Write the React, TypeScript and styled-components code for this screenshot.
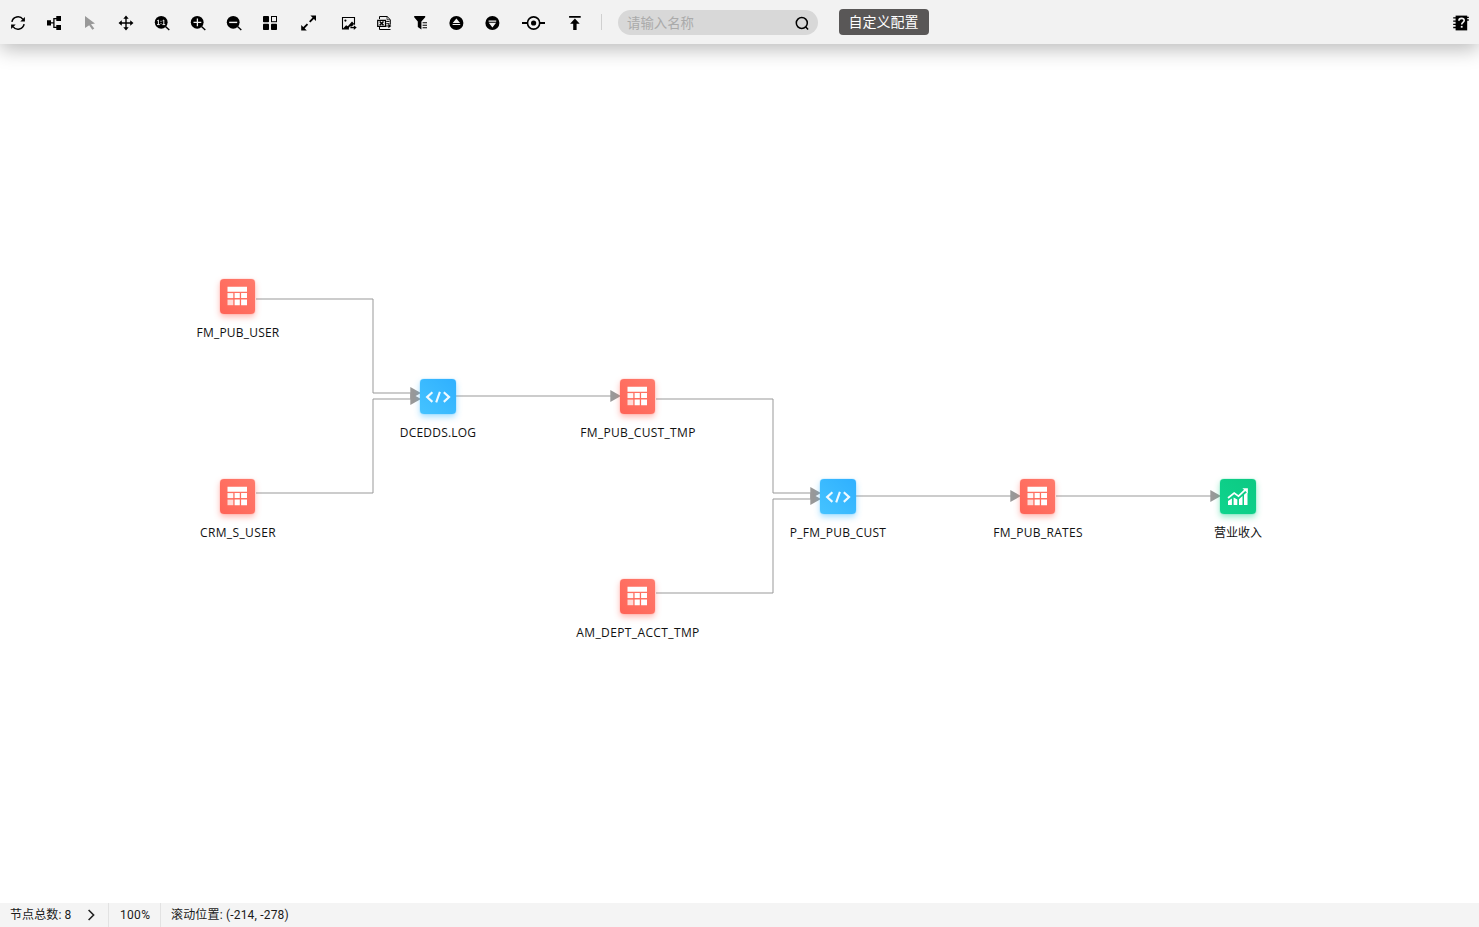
import React from 'react';
import styled, { createGlobalStyle } from 'styled-components';

const GlobalStyle = createGlobalStyle`
  * { box-sizing: border-box; }
  html, body { margin: 0; background: #fff; overflow: hidden; }
`;

const Page = styled.div`
  display: flex;
  flex-direction: column;
  height: 100vh;
  font-family: Roboto, 'Noto Sans CJK SC', sans-serif;
  font-size: 12px;
  color: #1a1a1a;
`;

const Toolbar = styled.header`
  display: flex;
  align-items: center;
  flex: none;
  height: 44px;
  background: #f2f2f2;
  box-shadow: 0 5px 20px rgba(0, 0, 0, 0.28);
  z-index: 1;
`;

const ToolButton = styled.button<{ $width?: number; $muted?: boolean }>`
  display: flex;
  align-items: center;
  justify-content: center;
  width: ${(p) => p.$width ?? 36}px;
  height: 44px;
  padding: 2px 0 0;
  border: 0;
  background: none;
  color: ${(p) => (p.$muted ? '#999' : '#000')};
`;

const Divider = styled.div`
  width: 1px;
  height: 16px;
  margin: 0 16px 0 7px;
  background: #d0d0d0;
`;

const SearchBox = styled.label`
  display: flex;
  align-items: center;
  width: 200px;
  height: 25px;
  margin-top: 1px;
  padding: 0 8px 0 9px;
  border-radius: 13px;
  background: #d8d8d8;
`;

const SearchInput = styled.input`
  flex: 1;
  min-width: 0;
  height: 20px;
  padding: 0 0 2px;
  border: 0;
  outline: 0;
  background: none;
  font: 13.4px 'Noto Sans CJK SC', sans-serif;
  &::placeholder { color: #aaa; }
`;

const ConfigButton = styled.button`
  width: 90px;
  height: 26px;
  margin-left: 21px;
  padding: 0 1px 2px 0;
  border: 0;
  border-radius: 4px;
  background: #595757;
  color: #fff;
  font: 14px/24px 'Noto Sans CJK SC', sans-serif;
`;

const Spacer = styled.div`
  flex: 1;
`;

const Canvas = styled.main`
  position: relative;
  flex: 1;
`;

const EdgeLayer = styled.svg`
  position: absolute;
  inset: 0;
  width: 100%;
  height: 100%;
`;

const palette = {
  table: { from: '#ff7a6c', to: '#ff6457', glow: 'rgba(255, 100, 87, 0.45)' },
  script: { from: '#2fb0ff', to: '#45c3ff', glow: 'rgba(56, 184, 255, 0.45)' },
  metric: { from: '#0cc983', to: '#0fd48d', glow: 'rgba(14, 206, 136, 0.45)' },
};
type Kind = keyof typeof palette;

const NodeBox = styled.div<{ $x: number; $y: number }>`
  position: absolute;
  left: ${(p) => p.$x}px;
  top: ${(p) => p.$y}px;
  display: flex;
  flex-direction: column;
  align-items: center;
  width: 160px;
  margin-left: -80px;
`;

const NodeTile = styled.div<{ $kind: Kind }>`
  width: ${(p) => (p.$kind === 'table' ? 35 : 36)}px;
  height: 35px;
  margin-right: ${(p) => (p.$kind === 'table' ? 1 : 0)}px;
  border-radius: 4px;
  background: linear-gradient(to top right, ${(p) => palette[p.$kind].to}, ${(p) => palette[p.$kind].from});
  box-shadow: 0 3px 6px ${(p) => palette[p.$kind].glow}, 0 0 1px ${(p) => palette[p.$kind].from};
  svg { display: block; }
`;

const NodeLabel = styled.div<{ $spacing: number }>`
  margin-top: 10px;
  font: 12px/18px 'Open Sans', 'Noto Sans CJK SC', sans-serif;
  letter-spacing: ${(p) => p.$spacing}px;
  color: #111;
  white-space: nowrap;
`;

const StatusBar = styled.footer`
  display: flex;
  flex: none;
  height: 24px;
  background: #f4f4f4;
`;

const StatusItem = styled.div<{ $width?: number; $spacing: number; $indent?: number }>`
  display: flex;
  align-items: center;
  width: ${(p) => (p.$width ? `${p.$width}px` : 'auto')};
  padding: 0 0 1px ${(p) => p.$indent ?? 10}px;
  border-right: ${(p) => (p.$width ? '1px solid #e2e2e2' : '0')};
  letter-spacing: ${(p) => p.$spacing}px;
  line-height: 16px;
  white-space: nowrap;
  svg { margin-left: 16px; }
`;

const Icon = ({ children, width = 18 }: { children: React.ReactNode; width?: number }) => (
  <svg width={width} height="18" viewBox={`0 0 ${width} 18`} fill="currentColor">
    {children}
  </svg>
);

const Lens = ({ children }: { children: React.ReactNode }) => (
  <Icon>
    <circle cx="8.2" cy="8.3" r="6.4" />
    <path d="M12.5 12.6l3.8 3.5" stroke="currentColor" strokeWidth="1.4" />
    {children}
  </Icon>
);

const tools: { name: string; width?: number; muted?: boolean; icon: React.ReactNode }[] = [
  {
    name: '刷新',
    icon: (
      <Icon>
        <path d="M2.9 7.9A6.2 6.2 0 0 1 14 5.4M15.1 10.1A6.2 6.2 0 0 1 4 12.6" fill="none" stroke="currentColor" strokeWidth="1.5" />
        <path d="M15.9 3v4.4h-4.6zM2.1 15v-4.4h4.6z" />
      </Icon>
    ),
  },
  {
    name: '布局',
    icon: (
      <Icon>
        <path d="M2 6.3h4v5.2H2zM11.3 2h4.7v5h-4.7zM11.3 11h4.7v5h-4.7z" />
        <path d="M6 8.9h3M12 4.6H8.9v8.8H12" fill="none" stroke="currentColor" strokeWidth="1.3" />
      </Icon>
    ),
  },
  { name: '选择', muted: true, icon: <Icon><path d="M4 2l10 7.6-4 .6 3.3 4.2-2 1.3-3.1-4.4L4 14z" /></Icon> },
  {
    name: '移动',
    icon: (
      <Icon>
        <path d="M9 4v10M4 9h10" stroke="currentColor" strokeWidth="1.4" />
        <path d="M9 1.5l2.7 3.3H6.3zM9 16.5l2.7-3.3H6.3zM1.5 9l3.3-2.7v5.4zM16.5 9l-3.3-2.7v5.4z" />
      </Icon>
    ),
  },
  {
    name: '原始大小',
    icon: (
      <Lens>
        <path d="M4.2 6.8l1.2-.8v4.6M4 10.6h2.8M9.6 6.8l1.2-.8v4.6M9.4 10.6h2.8M8 6.8v1M8 9.2v1" fill="none" stroke="#f2f2f2" strokeWidth="1" />
      </Lens>
    ),
  },
  { name: '放大', icon: <Lens><path d="M8.4 4.5v7.8M4.5 8.4h7.8" stroke="#f2f2f2" strokeWidth="1.3" /></Lens> },
  { name: '缩小', icon: <Lens><path d="M4.2 8.4h8" stroke="#f2f2f2" strokeWidth="1.4" /></Lens> },
  {
    name: '缩略图',
    icon: (
      <Icon>
        <rect x="2" y="2" width="6" height="6.2" rx=".8" />
        <rect x="2" y="9.8" width="6" height="6.2" rx=".8" />
        <rect x="10" y="9.8" width="6" height="6.2" rx=".8" />
        <rect x="10.5" y="2.5" width="5" height="5.2" fill="none" stroke="currentColor" strokeWidth="1" />
      </Icon>
    ),
  },
  {
    name: '全屏',
    width: 42,
    icon: (
      <Icon>
        <path d="M16 1.5v5.6l-5.6-5.6zM1.2 16.5v-5.6l5.6 5.6z" />
        <path d="M14.5 3L9.7 7.8M2.7 15l4.8-4.8" stroke="currentColor" strokeWidth="1.8" />
      </Icon>
    ),
  },
  {
    name: '导出图片',
    icon: (
      <Icon>
        <path d="M10 14.9H3.5V3.5h12v7.2" fill="none" stroke="currentColor" strokeWidth="1.1" />
        <circle cx="6.4" cy="6.6" r="1.1" />
        <path d="M3.8 14.8l3.3-3.6 1.7 1 4.2-4.6 2.2 2.2-2.2 2.6h-2.2L9.2 15z" />
        <path d="M11.4 13.6h4" stroke="currentColor" strokeWidth="1.3" />
        <path d="M14.8 11.2l2.9 2.4-2.9 2.4z" />
      </Icon>
    ),
  },
  {
    name: '导出表格',
    icon: (
      <Icon>
        <path d="M4.5 5V2.5h7.6l3.2 3.2v5M4.5 13v2.5h11" fill="none" stroke="currentColor" strokeWidth="1" />
        <path d="M12 2.5v3.2h3.3" fill="none" stroke="currentColor" strokeWidth=".7" />
        <path d="M2.7 6.3h7.8v6H2.7z" fill="none" stroke="currentColor" strokeWidth="1.2" />
        <path d="M4.7 7.4l3.8 3.9M8.5 7.4l-3.8 3.9" stroke="currentColor" strokeWidth="1.5" />
        <path d="M11.2 7.5h3.3M11.2 9.7h3.3M11 12h3" stroke="currentColor" strokeWidth=".9" />
        <path d="M13.4 9.8l2.9 2.2-2.9 2.2z" />
      </Icon>
    ),
  },
  {
    name: '筛选',
    icon: (
      <Icon>
        <path d="M3.2 2h11v1.3L10.4 7.6v7.8L6.8 13V7.6L3.2 3.3z" />
        <path d="M11.6 8.7H16M11.6 11.2H16M11.6 13.7H16" stroke="currentColor" strokeWidth="1.1" />
      </Icon>
    ),
  },
  {
    name: '上游',
    icon: (
      <Icon>
        <circle cx="9.4" cy="9" r="7" />
        <path d="M9.4 4.4l3.7 4.7H5.7zM5.6 10h7.6v1.1H5.6z" fill="#f2f2f2" />
      </Icon>
    ),
  },
  {
    name: '下游',
    icon: (
      <Icon>
        <circle cx="9.4" cy="9" r="7" />
        <path d="M9.4 13.4l3.7-4.7H5.7zM5.6 6.6h7.6v1.1H5.6z" fill="#f2f2f2" />
      </Icon>
    ),
  },
  {
    name: '定位',
    width: 48,
    icon: (
      <Icon width={24}>
        <circle cx="11.6" cy="9" r="6.1" fill="none" stroke="currentColor" strokeWidth="1.6" />
        <circle cx="11.6" cy="9" r="2.6" />
        <path d="M0 9h5.5M17.7 9H23" stroke="currentColor" strokeWidth="2" />
      </Icon>
    ),
  },
  {
    name: '置顶',
    icon: (
      <Icon>
        <path d="M2.1 2h11.6v1.7H2.1zM7.9 4.6l4.8 5.2H9.6V16H6.2V9.8H3.1z" />
      </Icon>
    ),
  },
];

const glyphs: Record<Kind, React.ReactNode> = {
  table: (
    <g fill="#fff" transform="translate(-.5 -.8)">
      <path d="M8 8.6h19.5v5H8zM15.1 14.9h5.2v5h-5.2zM21.6 14.9h5.9v5h-5.9zM15.1 21.4h5.2v5.6h-5.2zM21.6 21.4h5.9V27h-5.9z" />
      <path d="M8 14.9h5.8v5H8z" opacity=".95" />
      <path d="M8 21.4h5.8V27H8z" opacity=".75" />
    </g>
  ),
  script: (
    <path d="M12.4 13.3L7.1 18.1l5.3 4.8M23.8 13.3l5.3 4.8-5.3 4.8M19.9 12.8l-3.7 10.6" fill="none" stroke="#fff" strokeOpacity=".92" strokeWidth="2.1" />
  ),
  metric: (
    <g fill="#fff" transform="translate(0 -.6)">
      <path d="M8 22.6l3.9-2.5v6.4H8zM13.6 19.2l3.7 1.9v5.4h-3.7zM19 20.9l3.5-3.3v8.9H19zM24 16.3l3.5-2.9v13.1H24z" />
      <path d="M8 19.6l6.2-4.9 4.3 3 7.2-6.8" fill="none" stroke="#fff" strokeWidth="1.7" />
      <path d="M22.4 9.8h5.5v5.3z" />
    </g>
  ),
};

const nodes: { label: string; kind: Kind; x: number; y: number; spacing?: number }[] = [
  { label: 'FM_PUB_USER', kind: 'table', x: 238, y: 235, spacing: 0.2 },
  { label: 'CRM_S_USER', kind: 'table', x: 238, y: 435, spacing: 0.38 },
  { label: 'DCEDDS.LOG', kind: 'script', x: 438, y: 335, spacing: 0.2 },
  { label: 'FM_PUB_CUST_TMP', kind: 'table', x: 638, y: 335, spacing: 0.32 },
  { label: 'AM_DEPT_ACCT_TMP', kind: 'table', x: 638, y: 535, spacing: 0.38 },
  { label: 'P_FM_PUB_CUST', kind: 'script', x: 838, y: 435, spacing: 0.24 },
  { label: 'FM_PUB_RATES', kind: 'table', x: 1038, y: 435, spacing: 0.3 },
  { label: '营业收入', kind: 'metric', x: 1238, y: 435 },
];

const edges = [
  'M256 255H373V349H411',
  'M256 449H373V355H411',
  'M456 352H611',
  'M656 355H773V449H811',
  'M656 549H773V455H811',
  'M856 452H1011',
  'M1056 452H1211',
];

const arrows = [[421, 349], [421, 355], [621, 352], [821, 449], [821, 455], [1021, 452], [1221, 452]];

export default function App() {
  return (
    <Page>
      <GlobalStyle />
      <Toolbar>
        {tools.map((t) => (
          <ToolButton key={t.name} aria-label={t.name} $width={t.width} $muted={t.muted}>
            {t.icon}
          </ToolButton>
        ))}
        <Divider />
        <SearchBox>
          <SearchInput placeholder="请输入名称" />
          <svg width="16" height="16" viewBox="0 0 16 16" fill="none" stroke="#000" strokeWidth="1.5">
            <circle cx="7.8" cy="8" r="5.5" />
            <path d="M11.8 12l2.3 2.5" />
          </svg>
        </SearchBox>
        <ConfigButton>自定义配置</ConfigButton>
        <Spacer />
        <ToolButton aria-label="帮助">
          <Icon>
            <path d="M3.6 1.6h11.6v14.8H3.6z" />
            <path d="M1.2 3.9h3M1.2 7.1h3M1.2 10.3h3M1.2 13.5h3M15 3.3h1.8M15 6h1.8" stroke="currentColor" strokeWidth="1.3" />
            <path d="M6.9 6.7c0-3.2 5.3-3 5.3-.2 0 2-2.5 1.9-2.5 4.1" fill="none" stroke="#f2f2f2" strokeWidth="1.6" />
            <path d="M8.8 11.9h1.8v1.8H8.8z" fill="#f2f2f2" />
          </Icon>
        </ToolButton>
      </Toolbar>
      <Canvas>
        <EdgeLayer>
          {edges.map((d) => (
            <path key={d} d={d} fill="none" stroke="#999" strokeWidth="1" />
          ))}
          {arrows.map(([x, y]) => (
            <path key={`${x}-${y}`} d={`M${x} ${y}l-10.7-6v12z`} fill="#999" />
          ))}
        </EdgeLayer>
        {nodes.map((n) => (
          <NodeBox key={n.label} $x={n.x} $y={n.y}>
            <NodeTile $kind={n.kind}>
              <svg width="36" height="36" viewBox="0 0 36 36">{glyphs[n.kind]}</svg>
            </NodeTile>
            <NodeLabel $spacing={n.spacing ?? 0}>{n.label}</NodeLabel>
          </NodeBox>
        ))}
      </Canvas>
      <StatusBar>
        <StatusItem $width={109} $spacing={0.12}>
          节点总数: 8
          <svg width="9" height="12" viewBox="0 0 9 12" fill="none" stroke="#222" strokeWidth="1.6">
            <path d="M1.6 1l5 5-5 5" />
          </svg>
        </StatusItem>
        <StatusItem $width={52} $spacing={0.3} $indent={11}>100%</StatusItem>
        <StatusItem $spacing={0.18}>滚动位置: (-214, -278)</StatusItem>
      </StatusBar>
    </Page>
  );
}
